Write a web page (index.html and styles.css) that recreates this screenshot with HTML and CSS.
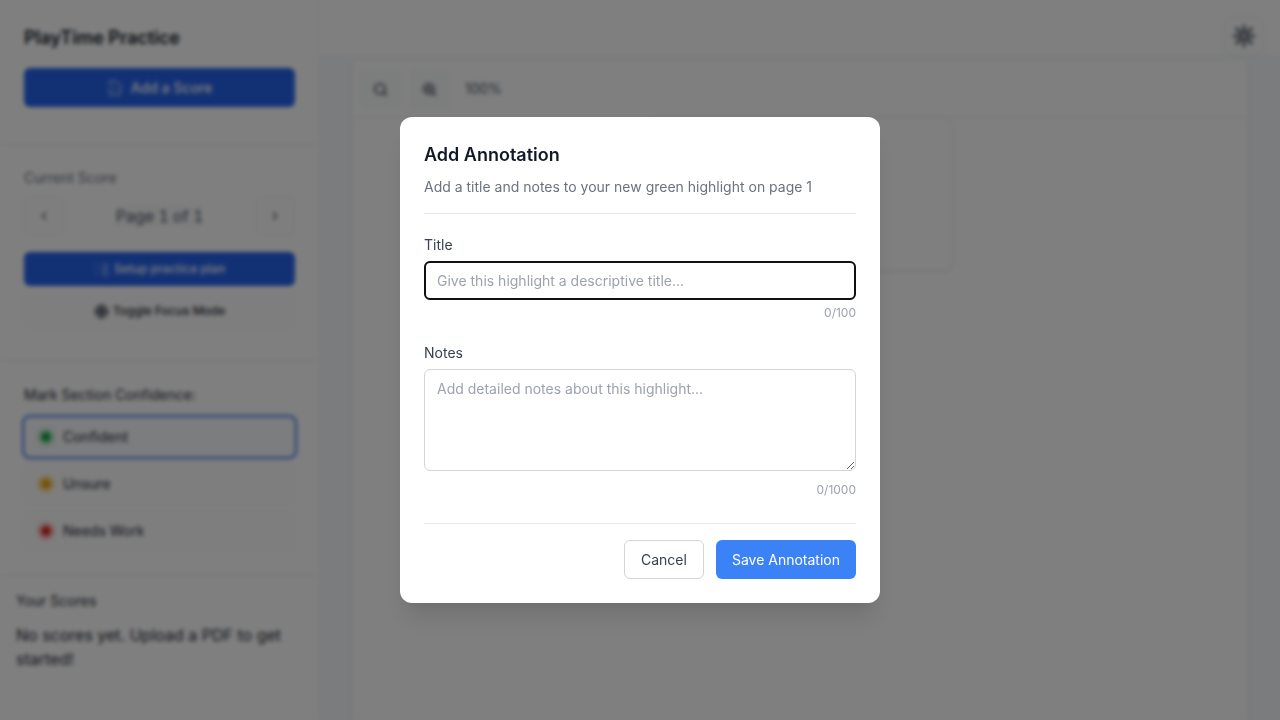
FILE: index.html
```html
<!DOCTYPE html>
<html lang="en">
<head>
<meta charset="utf-8">
<meta name="viewport" content="width=device-width, initial-scale=1">
<title>PlayTime Practice</title>
<link rel="stylesheet" href="styles.css">
</head>
<body>
<div class="app">
  <aside class="sidebar">
    <section class="section section-brand">
      <h1 class="brand">PlayTime Practice</h1>
      <button class="btn btn-primary btn-add" type="button">
        <svg class="icon icon-file" viewBox="0 0 24 24"><path d="M14 2H6a2 2 0 0 0-2 2v3M4 13v7a2 2 0 0 0 2 2h12a2 2 0 0 0 2-2V8l-6-6M8 10l5 5"/></svg>
        Add a Score
      </button>
    </section>
    <section class="section section-score">
      <h2 class="label-muted">Current Score</h2>
      <div class="pager">
        <button class="btn-square" type="button" aria-label="Previous page"><svg class="icon icon-sm" viewBox="0 0 24 24"><path d="M15 18l-6-6 6-6"/></svg></button>
        <span class="page-info">Page 1 of 1</span>
        <button class="btn-square" type="button" aria-label="Next page"><svg class="icon icon-sm" viewBox="0 0 24 24"><path d="M9 18l6-6-6-6"/></svg></button>
      </div>
      <button class="btn btn-primary btn-small" type="button">
        <svg class="icon icon-thin" viewBox="0 0 24 24"><path d="M3 5h2M3 12h2M3 19h2M12 5h9M12 9h9M12 13h9M12 17h9M12 21h9"/></svg>
        Setup practice plan
      </button>
      <button class="btn btn-outline btn-small" type="button">
        <svg class="icon icon-focus" viewBox="0 0 24 24"><circle cx="12" cy="12" r="10"/><circle cx="12" cy="12" r="5"/><path d="M12 2v20M2 12h20"/></svg>
        Toggle Focus Mode
      </button>
    </section>
    <section class="section section-confidence">
      <h2 class="label">Mark Section Confidence:</h2>
      <div class="choices">
        <button class="choice choice-active" type="button"><span class="dot dot-green"></span>Confident</button>
        <button class="choice" type="button"><span class="dot dot-amber"></span>Unsure</button>
        <button class="choice" type="button"><span class="dot dot-red"></span>Needs Work</button>
      </div>
    </section>
    <section class="scores">
      <h2 class="label">Your Scores</h2>
      <p class="empty">No scores yet. Upload a PDF to get started!</p>
    </section>
  </aside>
  <main class="main">
    <header class="topbar">
      <button class="btn-square" type="button" aria-label="Theme"><svg class="icon icon-sun" viewBox="0 0 24 24"><circle cx="12" cy="12" r="4"/><path d="M12 1v4M12 19v4M4 4l3 3M17 17l3 3M1 12h4M19 12h4M4 20l3-3M17 7l3-3"/></svg></button>
    </header>
    <div class="workspace">
      <div class="viewer">
        <div class="toolbar">
          <button class="tool" type="button" aria-label="Zoom out"><svg class="icon icon-zoom" viewBox="0 0 24 24"><circle cx="11" cy="11" r="8"/><path d="M21 21l-4-4"/></svg></button>
          <button class="tool" type="button" aria-label="Zoom in"><svg class="icon icon-zoom" viewBox="0 0 24 24"><circle cx="11" cy="11" r="8"/><path d="M21 21l-4-4M11 8v6M8 11h6"/></svg></button>
          <span class="zoom">100%</span>
        </div>
        <div class="sheet"></div>
      </div>
    </div>
  </main>
</div>
<div class="overlay">
  <form class="dialog" role="dialog" aria-labelledby="dialog-title">
    <header class="dialog-head">
      <h2 class="dialog-title" id="dialog-title">Add Annotation</h2>
      <p class="dialog-text">Add a title and notes to your new green highlight on page 1</p>
    </header>
    <div class="field">
      <label class="field-label" for="title">Title</label>
      <input class="control control-focus" id="title" type="text" maxlength="100" placeholder="Give this highlight a descriptive title...">
      <span class="count">0/100</span>
    </div>
    <div class="field field-notes">
      <label class="field-label" for="notes">Notes</label>
      <textarea class="control notes" id="notes" maxlength="1000" placeholder="Add detailed notes about this highlight..."></textarea>
      <span class="count">0/1000</span>
    </div>
    <footer class="dialog-foot">
      <button class="action action-cancel" type="button">Cancel</button>
      <button class="action action-save" type="submit">Save Annotation</button>
    </footer>
  </form>
</div>
</body>
</html>
```
FILE: styles.css
```css
* { box-sizing: border-box; }
body, h1, h2, p { margin: 0; }
body {
  font-family: Inter, "Liberation Sans", sans-serif;
  font-size: 16px;
  line-height: 24px;
  color: #1f2937;
  background: #f8fafc;
}
button, input, textarea { font: inherit; color: inherit; margin: 0; }
.app { display: flex; height: 100vh; overflow: hidden; }

.icon {
  width: 16px;
  height: 16px;
  flex: none;
  fill: none;
  stroke: currentColor;
  stroke-width: 2;
  stroke-linecap: round;
  stroke-linejoin: round;
}
.icon-sm { width: 14px; height: 14px; }
.icon-focus { width: 15px; height: 15px; }
.icon-zoom { width: 15px; height: 15px; stroke-width: 3; }
.icon-sun { width: 22px; height: 22px; stroke-width: 3; }
.icon-thin { stroke-width: 1; }
.icon-file { stroke-width: 1.5; }

.sidebar {
  width: 320px;
  flex: none;
  background: #fff;
  border-right: 1px solid #f3f4f6;
}
.section { padding: 24px; border-bottom: 1px solid #e5e7eb; }
.section-brand { padding-bottom: 37px; }
.brand { font-size: 18px; line-height: 28px; font-weight: 600; color: #111827; margin-bottom: 16px; }
.btn {
  display: flex;
  align-items: center;
  justify-content: center;
  gap: 8px;
  width: 100%;
  border: 1px solid transparent;
  border-radius: 6px;
  font-size: 14px;
  line-height: 20px;
  font-weight: 500;
}
.btn-primary { background: #2563eb; color: #fff; }
.btn-add { height: 39px; }
.btn-small { height: 34px; font-size: 12px; gap: 4px; }
.btn-outline { background: #fdfdfd; border-color: #f0f1f3; margin-top: 8px; }
.section-score { padding-top: 23px; padding-bottom: 32px; }
.label, .label-muted { font-size: 14px; line-height: 20px; font-weight: 400; }
.label-muted { color: #6b7280; }
.pager { display: flex; align-items: center; justify-content: space-between; margin: 8px 0 16px; }
.btn-square {
  display: grid;
  place-items: center;
  width: 40px;
  height: 40px;
  padding: 0;
  border: 1px solid #eceef0;
  border-radius: 6px;
  background: #fdfdfd;
  color: #4b5563;
}
.page-info { background: #f9fafb; color: #4b5563; font-variant-numeric: tabular-nums; }
.choices { display: grid; gap: 7px; margin-top: 12px; }
.choice {
  display: flex;
  align-items: center;
  gap: 8px;
  width: 100%;
  height: 40px;
  padding: 0 12px;
  border: 1px solid #f0f1f3;
  border-radius: 6px;
  background: #fdfdfd;
  font-size: 14px;
  font-weight: 400;
}
.choice-active { background: #f8fafc; border-color: transparent; outline: 2px solid #3b70ed; }
.dot { width: 18px; height: 18px; border: 4px solid; border-radius: 50%; background-clip: padding-box; }
.dot-green { background-color: #16a34a; border-color: #bfe8cc; }
.dot-amber { background-color: #eaa908; border-color: #fbe2a8; }
.dot-red { background-color: #dc2626; border-color: #fbc0c0; }
.scores { padding: 15px 16px; }
.empty { margin-top: 12px; }

.main { flex: 1; display: flex; flex-direction: column; min-width: 0; }
.topbar {
  display: flex;
  justify-content: flex-end;
  height: 57px;
  padding: 16px 16px 0;
  border-bottom: 1px solid #f3f4f6;
  background: #fff;
}
.workspace { flex: 1; padding: 4px 32px 0; background: #f6f8fb; }
.viewer { height: 100%; background: #fff; border-radius: 6px 6px 0 0; box-shadow: 0 1px 3px rgba(0, 0, 0, 0.15); }
.toolbar {
  display: flex;
  align-items: center;
  gap: 8px;
  height: 57px;
  padding: 0 8px;
  border-bottom: 1px solid #e5e7eb;
  font-size: 14px;
  color: #4b5563;
}
.tool {
  display: grid;
  place-items: center;
  width: 41px;
  height: 41px;
  padding: 0;
  border: 1px solid #f6f7f8;
  border-radius: 6px;
  background: #f9fafb;
}
.zoom { padding-left: 7px; }
.sheet { width: 304px; height: 152px; margin: 0 auto; border-radius: 8px; box-shadow: 0 1px 4px rgba(0, 0, 0, 0.14); }

.overlay {
  position: fixed;
  inset: 0;
  display: grid;
  place-items: center;
  padding: 16px;
  background: rgba(0, 0, 0, 0.5);
  backdrop-filter: blur(2px);
}
.dialog {
  width: 100%;
  max-width: 480px;
  padding: 24px;
  border-radius: 12px;
  background: #fff;
  box-shadow: 0 20px 25px -5px rgba(0, 0, 0, 0.1), 0 10px 10px -5px rgba(0, 0, 0, 0.04);
}
.dialog-head { padding-bottom: 16px; border-bottom: 1px solid #e5e7eb; margin-bottom: 20px; }
.dialog-title { font-size: 18px; line-height: 28px; font-weight: 600; color: #111827; margin-bottom: 8px; }
.dialog-text { font-size: 14px; line-height: 20px; color: #6b7280; }
.field { display: flex; flex-direction: column; }
.field-notes { margin-top: 20px; }
.field-label { font-size: 14px; line-height: 22px; color: #374151; margin-bottom: 5px; }
.control {
  width: 100%;
  height: 39px;
  padding: 8px 12px;
  border: 1px solid #d1d5db;
  border-radius: 6px;
  background: #fff;
  font-size: 14px;
  line-height: 21px;
}
.control::placeholder { color: #9ca3af; }
.control-focus { outline: 2px solid #101010; outline-offset: -2px; }
.notes { height: 102px; resize: vertical; margin-bottom: 6px; }
.count { align-self: flex-end; margin-top: 4px; font-size: 12px; line-height: 18px; color: #9ca3af; }
.dialog-foot {
  display: flex;
  justify-content: flex-end;
  gap: 12px;
  margin-top: 24px;
  padding-top: 16px;
  border-top: 1px solid #e5e7eb;
}
.action {
  height: 39px;
  padding: 0 16px;
  border: 1px solid #d1d5db;
  border-radius: 6px;
  background: #fff;
  color: #374151;
  font-size: 14px;
}
.action-save { border: 0; background: #3b82f6; color: #fff; }
```
